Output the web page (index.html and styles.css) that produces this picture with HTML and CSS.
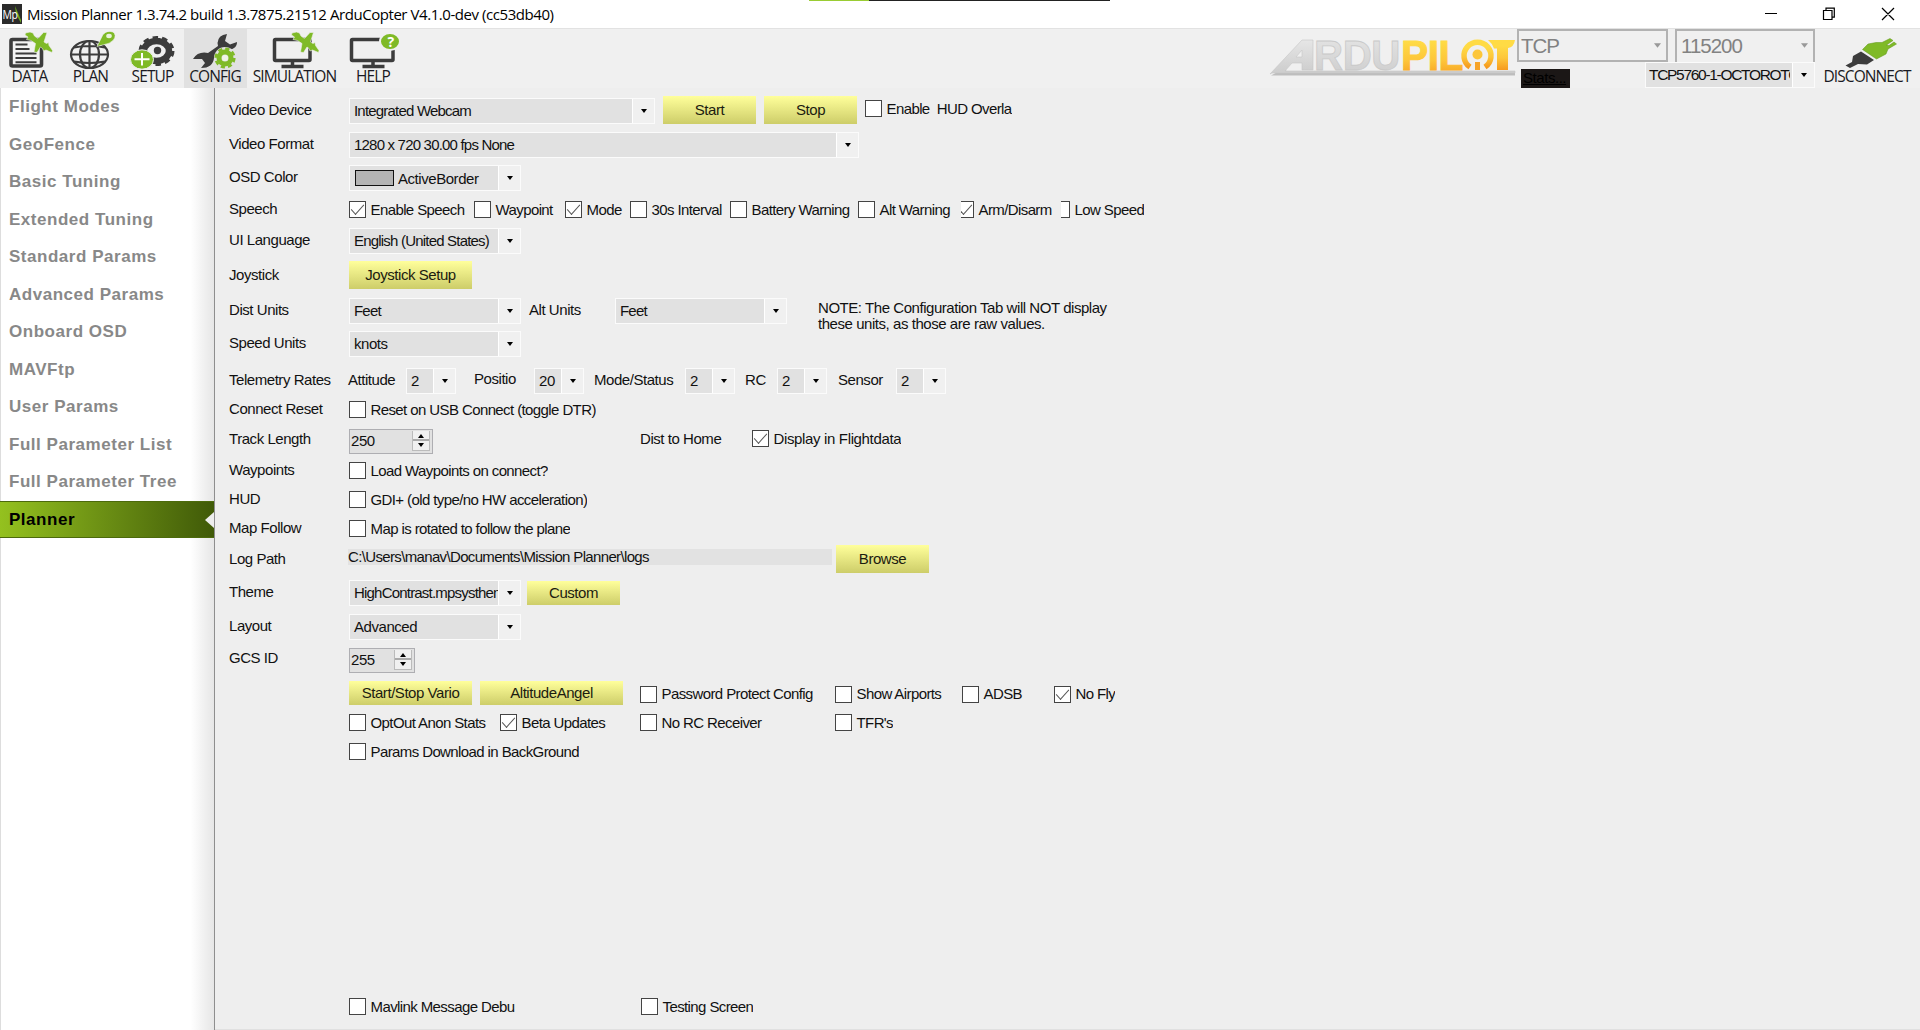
FILE: index.html
```html
<!DOCTYPE html>
<html lang="en">
<head>
<meta charset="utf-8">
<title>Mission Planner</title>
<link rel="stylesheet" href="styles.css">
</head>
<body>
<svg class="defs" width="0" height="0" aria-hidden="true">
  <defs>
    <linearGradient id="silver" x1="0" y1="0" x2="0" y2="1"><stop offset="0" stop-color="#e6e6e6"/><stop offset="1" stop-color="#cccccc"/></linearGradient>
    <linearGradient id="gold" x1="0" y1="0" x2="0" y2="1"><stop offset="0.2" stop-color="#ffdb45"/><stop offset="0.6" stop-color="#fdc63a"/><stop offset="1" stop-color="#f69a1e"/></linearGradient>
    <symbol id="plane" viewBox="0 0 28 22" overflow="visible">
      <path fill="#7fba27" stroke="#efefef" stroke-width="0.6" d="M0 3 L0.500 1 L5 0 L8 1 L9.500 4 L13 6.500 L18.500 .5 L22 .5 L19 10 L21.500 11.500 L23.500 10.500 L24 13.500 L27.500 18.500 L27 20.500 L21 18 L18.500 19 L17.500 16.500 L15.500 15 L12 20.500 L9 20 L10.500 11.500 L6 8.500 L1.500 7.500 L3 5 Z"/>
    </symbol>
  </defs>
</svg>
<header class="titlebar">
  <svg class="app-icon" viewBox="0 0 20 20"><rect width="20" height="20" fill="#2b2b2b"/><path d="M13 2l6 14v3l-5-9z" fill="#6aa51e"/><text x="0.500" y="14.500" font-size="12" textLength="15" lengthAdjust="spacingAndGlyphs" fill="#fff" font-family="Open Sans, sans-serif">Mp</text></svg>
  <span class="title">Mission Planner 1.3.74.2 build 1.3.7875.21512 ArduCopter V4.1.0-dev (cc53db40)</span>
  <div class="progress"><i></i></div>
  <svg class="window-controls" viewBox="1760 0 160 29"><g fill="none" stroke="#000" stroke-width="1.200"><path d="M1765 13.500h12M1823.500 10.500h8.500v9h-8.500zM1826 10.500v-2.300h8.300v9H1832M1882 8l12 12M1894 8l-12 12"/></g></svg>
</header>
<nav class="toolbar">
  <a class="tool tool-data"><svg viewBox="0 29 60 41"><rect x="11" y="39.500" width="30.500" height="26.500" rx="1.500" fill="#f3f3f3" stroke="#3c3c3c" stroke-width="3.600"/><path d="M15.500 44.500h12M15.500 49h14M15.500 53.500h21M15.500 58h21M15.500 62.300h21" stroke="#3c3c3c" stroke-width="2"/><use href="#plane" x="25" y="32" width="28" height="22"/></svg><span>DATA</span></a>
  <a class="tool tool-plan"><svg viewBox="60 29 62 41"><g fill="none" stroke="#3c3c3c" stroke-width="2.200"><ellipse cx="89.500" cy="54.500" rx="18.500" ry="13.500"/><ellipse cx="89.500" cy="54.500" rx="9.500" ry="13.500"/><path d="M89.500 41v27M71 54.500h37M74 47.500q15.500-3 31 0M74 61.500q15.500 3 31 0"/></g><path d="M97 46.500l6-12q4-4.500 10-2.500q4 3 .5 8q-4 4-9 4.500z" fill="#7fba27" stroke="#f0f0f0" stroke-width=".6"/><ellipse cx="109" cy="36" rx="2.800" ry="2.200" fill="#e9f2dc"/></svg><span>PLAN</span></a>
  <a class="tool tool-setup"><svg viewBox="122 29 62 41"><ellipse cx="156.500" cy="51" rx="12.500" ry="10" fill="none" stroke="#3c3c3c" stroke-width="6.500"/><ellipse cx="156.500" cy="51" rx="16.500" ry="13.500" fill="none" stroke="#3c3c3c" stroke-width="3" stroke-dasharray="5.500 4"/><circle cx="157.500" cy="50.500" r="3.700" fill="#3c3c3c"/><ellipse cx="142" cy="59.500" rx="11.500" ry="9.700" fill="#7fba27" stroke="#efefef" stroke-width="1"/><path d="M142 53v12.500M134.500 59.300h15" stroke="#fff" stroke-width="2"/></svg><span>SETUP</span></a>
  <a class="tool tool-config active"><svg viewBox="184 29 63 41"><path d="M227 34Q218 35 217.500 43L218 46L208 53Q198 51 193 59L202 59L205 63L201 68Q213 68 214 58L225 50Q237 50 237 42L230 44.500L225 41Z" fill="#3c3c3c"/><circle cx="225" cy="58" r="11" fill="#e1e1e1"/><circle cx="225" cy="58" r="6" fill="none" stroke="#7fba27" stroke-width="5"/><circle cx="225" cy="58" r="9.300" fill="none" stroke="#7fba27" stroke-width="2.600" stroke-dasharray="4.200 3.100"/><circle cx="225" cy="58" r="3" fill="#f0f4e8"/></svg><span>CONFIG</span></a>
  <a class="tool tool-simulation"><svg viewBox="247 29 96 41"><rect x="274.500" y="39.500" width="35.500" height="21" rx="1" fill="none" stroke="#3c3c3c" stroke-width="3.500"/><path d="M292.500 61v5M281.500 66.500h22" stroke="#3c3c3c" stroke-width="3.500"/><use href="#plane" x="291.500" y="32" width="28" height="22"/></svg><span>SIMULATION</span></a>
  <a class="tool tool-help"><svg viewBox="343 29 61 41"><rect x="351.500" y="39.500" width="41.500" height="21" rx="1" fill="none" stroke="#3c3c3c" stroke-width="3.500"/><path d="M373 61v5M362.500 66.500h22" stroke="#3c3c3c" stroke-width="3.500"/><ellipse cx="390" cy="41.500" rx="10" ry="8.500" fill="#7fba27" stroke="#f0f0f0" stroke-width="2"/><text x="390.500" y="46.500" text-anchor="middle" font-size="14" font-weight="bold" fill="#fff" font-family="Open Sans, sans-serif">?</text></svg><span>HELP</span></a>
  <div class="spacer"></div>
  <svg class="logo" viewBox="1267 29 250 45">
    <path d="M1271 74.500L1283 68L1288 70.500H1515V74.500Z" fill="#bdbdbd"/>
    <path d="M1270 73L1302 39H1313V69H1302V62H1292L1285 70H1515V72H1272ZM1296 56H1302V49Z" fill="url(#silver)" stroke="#c6c6c6" stroke-width=".6" fill-rule="evenodd"/>
    <text x="1314" y="69" font-size="42" textLength="86" lengthAdjust="spacingAndGlyphs" font-weight="bold" font-family="Liberation Sans, sans-serif" fill="url(#silver)" stroke="#c9c9c9" stroke-width=".8">RDU</text>
    <text x="1401" y="69" font-size="42" textLength="62" lengthAdjust="spacingAndGlyphs" font-weight="bold" font-family="Liberation Sans, sans-serif" fill="url(#gold)" stroke="url(#gold)">PIL</text>
    <path d="M1470 66A13.500 13.500 0 1 1 1485 66" fill="none" stroke="url(#gold)" stroke-width="5.500"/><circle cx="1477.500" cy="53.500" r="5" fill="#fcc63a"/><path d="M1475 61h5v8h-5z" fill="#f7a428"/>
    <path d="M1488 39H1515Q1514 46 1508 47V69H1497V47.500H1494Q1492 42 1488 39Z" fill="url(#gold)"/>
  </svg>
  <div class="connection">
    <div class="big-combo port">TCP<svg viewBox="0 0 8 5"><path d="M0 0h8l-4 5z"/></svg></div>
    <div class="big-combo baud">115200<svg viewBox="0 0 8 5"><path d="M0 0h8l-4 5z"/></svg></div>
    <a class="stats">Stats...</a>
    <div class="combo vehicle"><span>TCP5760-1-OCTOROTOR</span><i></i></div>
  </div>
  <a class="tool tool-disconnect"><svg viewBox="1815 29 105 41"><path d="M1845.500 65.500L1852 62L1853 56L1861 51.500L1874 60L1867 64.500L1858 64L1850 68Z" fill="#3c3c3c"/><path d="M1862.500 49.500L1868 44L1876 42.500L1882 42.500L1890 38.500L1893 40.500L1886.500 45L1889 45.500L1894 42L1896.500 44L1888 49L1886 54L1876.500 59Z" fill="#7fba27" stroke="#5d9414" stroke-width=".5"/></svg><span>DISCONNECT</span></a>
</nav>
<div class="body">
  <aside class="sidebar">
    <a>Flight Modes</a><a>GeoFence</a><a>Basic Tuning</a><a>Extended Tuning</a><a>Standard Params</a><a>Advanced Params</a><a>Onboard OSD</a><a>MAVFtp</a><a>User Params</a><a>Full Parameter List</a><a>Full Parameter Tree</a><a class="current">Planner</a>
  </aside>
  <main class="planner">
    <div class="row r-video"><label>Video Device</label><div class="combo w306 snug"><span>Integrated Webcam</span><i></i></div><button class="tall">Start</button><button class="tall">Stop</button><div class="check up"><b></b><span>Enable&nbsp; HUD Overla</span></div></div>
    <div class="row"><label>Video Format</label><div class="combo w510 snug"><span>1280 x 720 30.00 fps None</span><i></i></div></div>
    <div class="row"><label>OSD Color</label><div class="combo w172 swatch"><em></em><span>ActiveBorder</span><i></i></div></div>
    <div class="row r-speech"><label>Speech</label><div class="check on"><b></b><span>Enable Speech</span></div><div class="check"><b></b><span>Waypoint</span></div><div class="check on"><b></b><span>Mode</span></div><div class="check"><b></b><span>30s Interval</span></div><div class="check"><b></b><span>Battery Warning</span></div><div class="check"><b></b><span>Alt Warning</span></div><div class="check on cut-4"><b></b><span>Arm/Disarm</span></div><div class="check cut-8"><b></b><span>Low Speed</span></div></div>
    <div class="row"><label>UI Language</label><div class="combo w172 snug"><span>English (United States)</span><i></i></div></div>
    <div class="row"><label>Joystick</label><button class="tall w123">Joystick Setup</button></div>
    <div class="row r-units"><label>Dist Units</label><div class="combo w172 snug"><span>Feet</span><i></i></div><label>Alt Units</label><div class="combo w172 snug"><span>Feet</span><i></i></div><p>NOTE: The Configuration Tab will NOT display<br>these units, as those are raw values.</p></div>
    <div class="row"><label>Speed Units</label><div class="combo w172"><span>knots</span><i></i></div></div>
    <div class="row r-rates"><label>Telemetry Rates</label><label>Attitude</label><div class="combo w50"><span>2</span><i></i></div><label class="raised">Positio</label><div class="combo w50"><span>20</span><i></i></div><label>Mode/Status</label><div class="combo w50"><span>2</span><i></i></div><label>RC</label><div class="combo w50"><span>2</span><i></i></div><label>Sensor</label><div class="combo w50"><span>2</span><i></i></div></div>
    <div class="row"><label>Connect Reset</label><div class="check"><b></b><span>Reset on USB Connect (toggle DTR)</span></div></div>
    <div class="row r-track"><label class="raised">Track Length</label><div class="spin w84"><span>250</span><i></i></div><label class="raised">Dist to Home</label><div class="check on up wide"><b></b><span>Display in Flightdata</span></div></div>
    <div class="row"><label>Waypoints</label><div class="check"><b></b><span>Load Waypoints on connect?</span></div></div>
    <div class="row"><label>HUD</label><div class="check"><b></b><span>GDI+ (old type/no HW acceleration)</span></div></div>
    <div class="row"><label>Map Follow</label><div class="check"><b></b><span>Map is rotated to follow the plane</span></div></div>
    <div class="row r-log"><label>Log Path</label><div class="path">C:\Users\manav\Documents\Mission Planner\logs</div><button class="tall">Browse</button></div>
    <div class="row r-theme"><label>Theme</label><div class="combo w172 snug"><span>HighContrast.mpsystheme</span><i></i></div><button>Custom</button></div>
    <div class="row"><label>Layout</label><div class="combo w172"><span>Advanced</span><i></i></div></div>
    <div class="row"><label class="raised">GCS ID</label><div class="spin w66"><span>255</span><i></i></div></div>
    <div class="row r-extra"><label></label><button class="w123">Start/Stop Vario</button><button class="w143">AltitudeAngel</button><div class="check down"><b></b><span>Password Protect Config</span></div><div class="check down"><b></b><span>Show Airports</span></div><div class="check down"><b></b><span>ADSB</span></div><div class="check on down"><b></b><span>No Fly</span></div></div>
    <div class="row r-stats"><label></label><div class="check"><b></b><span>OptOut Anon Stats</span></div><div class="check on"><b></b><span>Beta Updates</span></div><div class="check"><b></b><span>No RC Receiver</span></div><div class="check"><b></b><span>TFR's</span></div></div>
    <div class="row"><label></label><div class="check"><b></b><span>Params Download in BackGround</span></div></div>
    <div class="row r-debug"><label></label><div class="check"><b></b><span>Mavlink Message Debu</span></div><div class="check"><b></b><span>Testing Screen</span></div></div>
  </main>
</div>
</body>
</html>
```
FILE: styles.css
```css
* { box-sizing: border-box; }
body { margin: 0; width: 1920px; height: 1030px; overflow: hidden; display: flex; flex-direction: column; background: #eee; color: #111; font: 15px/17px "Liberation Sans", Arial, sans-serif; letter-spacing: -0.45px; }
svg { display: block; }
.defs { position: absolute; }

.titlebar { height: 29px; flex: none; background: #fff; display: flex; align-items: center; padding-left: 2px; position: relative; font: 15px/20px "Open Sans", sans-serif; letter-spacing: -0.44px; color: #000; border-bottom: 1px solid #e2e2e2; }
.app-icon { width: 20px; height: 20px; }
.title { margin-left: 5px; flex: 1; white-space: nowrap; }
.progress { position: absolute; left: 809px; top: 0; width: 301px; height: 1px; background: #222; }
.progress i { display: block; width: 60px; height: 1px; background: #9c3; }
.window-controls { width: 160px; height: 29px; }

.toolbar { height: 59px; flex: none; display: flex; background: #f0f0f0; }
.tool { height: 59px; display: flex; flex-direction: column; align-items: center; font: 15.500px/18px "Open Sans", sans-serif; letter-spacing: -0.9px; color: #1a1a22; }
.tool svg { width: 100%; height: 41px; flex: none; margin-bottom: -3px; }
.tool span { white-space: nowrap; margin-right: 1px; }
.tool.active { background: #e1e1e1; }
.tool-data { width: 60px; }
.tool-plan, .tool-setup { width: 62px; }
.tool-config { width: 63px; }
.tool-simulation { width: 96px; }
.tool-help { width: 61px; }
.tool-disconnect { width: 105px; }
.spacer { flex: 1; }
.logo { width: 250px; height: 47px; overflow: visible; }
.connection { width: 298px; display: grid; grid-template: 33px 26px / 151px 7px auto; }
.big-combo { height: 33px; border: 2px solid #b2b2b2; font-size: 20.5px; letter-spacing: -1px; color: #828282; display: flex; align-items: center; justify-content: space-between; padding: 0 5px 0 2px; }
.big-combo svg { width: 7px; height: 5px; fill: #999; }
.baud { grid-column: 3; border-bottom: 0; padding: 0 5px 2px 4px; }
.stats { width: 49px; height: 19px; margin: 7px 0 0 4px; background: #1b1716; color: #000; text-decoration: underline; font-size: 15px; line-height: 18px; padding-left: 2px; overflow: hidden; }

.combo { height: 26px; border: 1.500px solid #fbfbfb; background: #e1e1e1; display: flex; align-items: stretch; }
.combo span { flex: 1; overflow: hidden; white-space: nowrap; padding: 0 0 0 4px; line-height: 24px; }
.combo > i { width: 22px; flex: none; border-left: 1px solid #fff; background: #f0f0f0; display: flex; align-items: center; justify-content: center; }
.combo > i::after { content: ""; margin-left: 1px; border: 3.500px solid transparent; border-top: 4px solid #000; border-bottom: 0; }
.combo em { width: 39px; height: 16px; margin: 4px 0 0 5px; background: #b4b4b4; border: 1px solid #111; }
.combo.swatch span { padding-top: 1px; }
.snug { letter-spacing: -0.8px; }
.connection .vehicle { grid-column: 2 / 4; width: 170px; margin-left: -23px; letter-spacing: -1.3px; }
.connection .vehicle span { padding-left: 3px; margin-right: 2px; line-height: 23px; font-size: 15.500px; }

.body { flex: 1; display: flex; min-height: 0; }
.sidebar { width: 215px; flex: none; border-right: 1px solid #8e8e8e; border-left: 1px solid #ddd; background: linear-gradient(90deg, #fff 89%, #e6e6e6); font-weight: bold; font-size: 17px; letter-spacing: 0.53px; color: #888; }
.sidebar a { display: flex; align-items: center; height: 37.500px; padding-left: 8px; }
.sidebar .current { position: relative; margin-left: -1px; padding-left: 9px; background: linear-gradient(90deg, #94c11f, #405a08); border: solid #4c6a0c; border-width: 1px 0; color: #000; }
.sidebar .current::after { content: ""; position: absolute; right: 0; top: 10px; border: 8.500px solid transparent; border-right: 9px solid #eee; border-left: 0; }

.planner { flex: 1; padding: 10px 0 0 14px; display: grid; align-content: start; border-bottom: 1px solid #e0e0e0; grid-template-rows: 34px 33px 32px 31px 35px 35px 33px 37px 29px 31px 30px 29px 29px 31px 33px 34px 33px 33px 30px 29px 255px 26px; }
.row { height: 26px; display: grid; grid-template-rows: 26px; grid-template-columns: 120px auto; justify-content: start; align-items: center; white-space: nowrap; }
.r-video { grid-template-columns: 120px 314px 101px 101px auto; }
.r-speech { grid-template-columns: 120px 125px 91px 65px 100px 128px 103px 100px auto; }
.r-units { grid-template-columns: 120px 180px 86px 203px auto; }
.r-rates { grid-template-columns: 119px 58px 68px 60px 60px 91px 60px 32px 61px 58px auto; }
.r-track { grid-template-columns: 120px 291px 112px auto; }
.r-log { grid-template-columns: 119px 488px auto; }
.r-theme { grid-template-columns: 120px 178px auto; }
.r-extra { grid-template-columns: 120px 131px 160px 195px 127px 92px auto; }
.r-stats { grid-template-columns: 120px 151px 140px 195px auto; }
.r-debug { grid-template-columns: 120px 292px auto; }
.w50 { width: 50px; } .w66 { width: 66px; } .w84 { width: 84px; } .w123 { width: 123px; } .w143 { width: 143px; }
.w172 { width: 172px; } .w306 { width: 306px; } .w510 { width: 510px; }
label { padding-bottom: 3px; }
.raised { padding-bottom: 5px; }
p { margin: 10px 0 0; line-height: 16.300px; }

.check { display: flex; align-items: center; gap: 4.500px; overflow: hidden; letter-spacing: -0.6px; margin-top: -1px; }
.check.wide { letter-spacing: -0.35px; }
.check b { width: 17px; height: 17px; flex: none; border: 1.500px solid #444; background: #fff; display: flex; justify-content: center; }
.check.on b::after { content: ""; width: 12px; height: 6px; margin-top: 2px; border: solid #555; border-width: 0 0 1.500px 1.500px; transform: rotate(-48deg) skewX(-6deg); }
.check span { margin-top: -1px; }
.check.up { margin-top: -5px; }
.check.down { margin-top: 2px; }
.cut-4 b { margin-left: -4px; }
.cut-8 b { margin-left: -8px; }

button { border: 0; width: 93px; height: 24px; padding: 0 0 1px; background: linear-gradient(#ffff9b, #cdcd69); color: #1c1c10; font: inherit; letter-spacing: inherit; }
.tall { height: 28px; margin-top: -2px; }
.path { width: 484px; height: 16px; margin-top: -7px; background: #e2e2e2; line-height: 15px; letter-spacing: -0.65px; }
.spin { height: 25px; border: 1.500px solid #aeaeb2; background: #e1e1e1; display: flex; padding: 1px 2px 2px 1px; line-height: 20px; }
.spin span { flex: 1; }
.spin i { width: 18px; background: linear-gradient(#f0f0f0 43%, #aaa 43%, #aaa 54%, #f0f0f0 54%); border: solid #bbb; border-width: 0 1px 1px; display: flex; flex-direction: column; align-items: center; justify-content: space-between; padding: 3px 0; }
.spin i::before, .spin i::after { content: ""; border: 3.500px solid transparent; }
.spin i::before { border-bottom: 4px solid #000; border-top: 0; }
.spin i::after { border-top: 4px solid #000; border-bottom: 0; }
```
